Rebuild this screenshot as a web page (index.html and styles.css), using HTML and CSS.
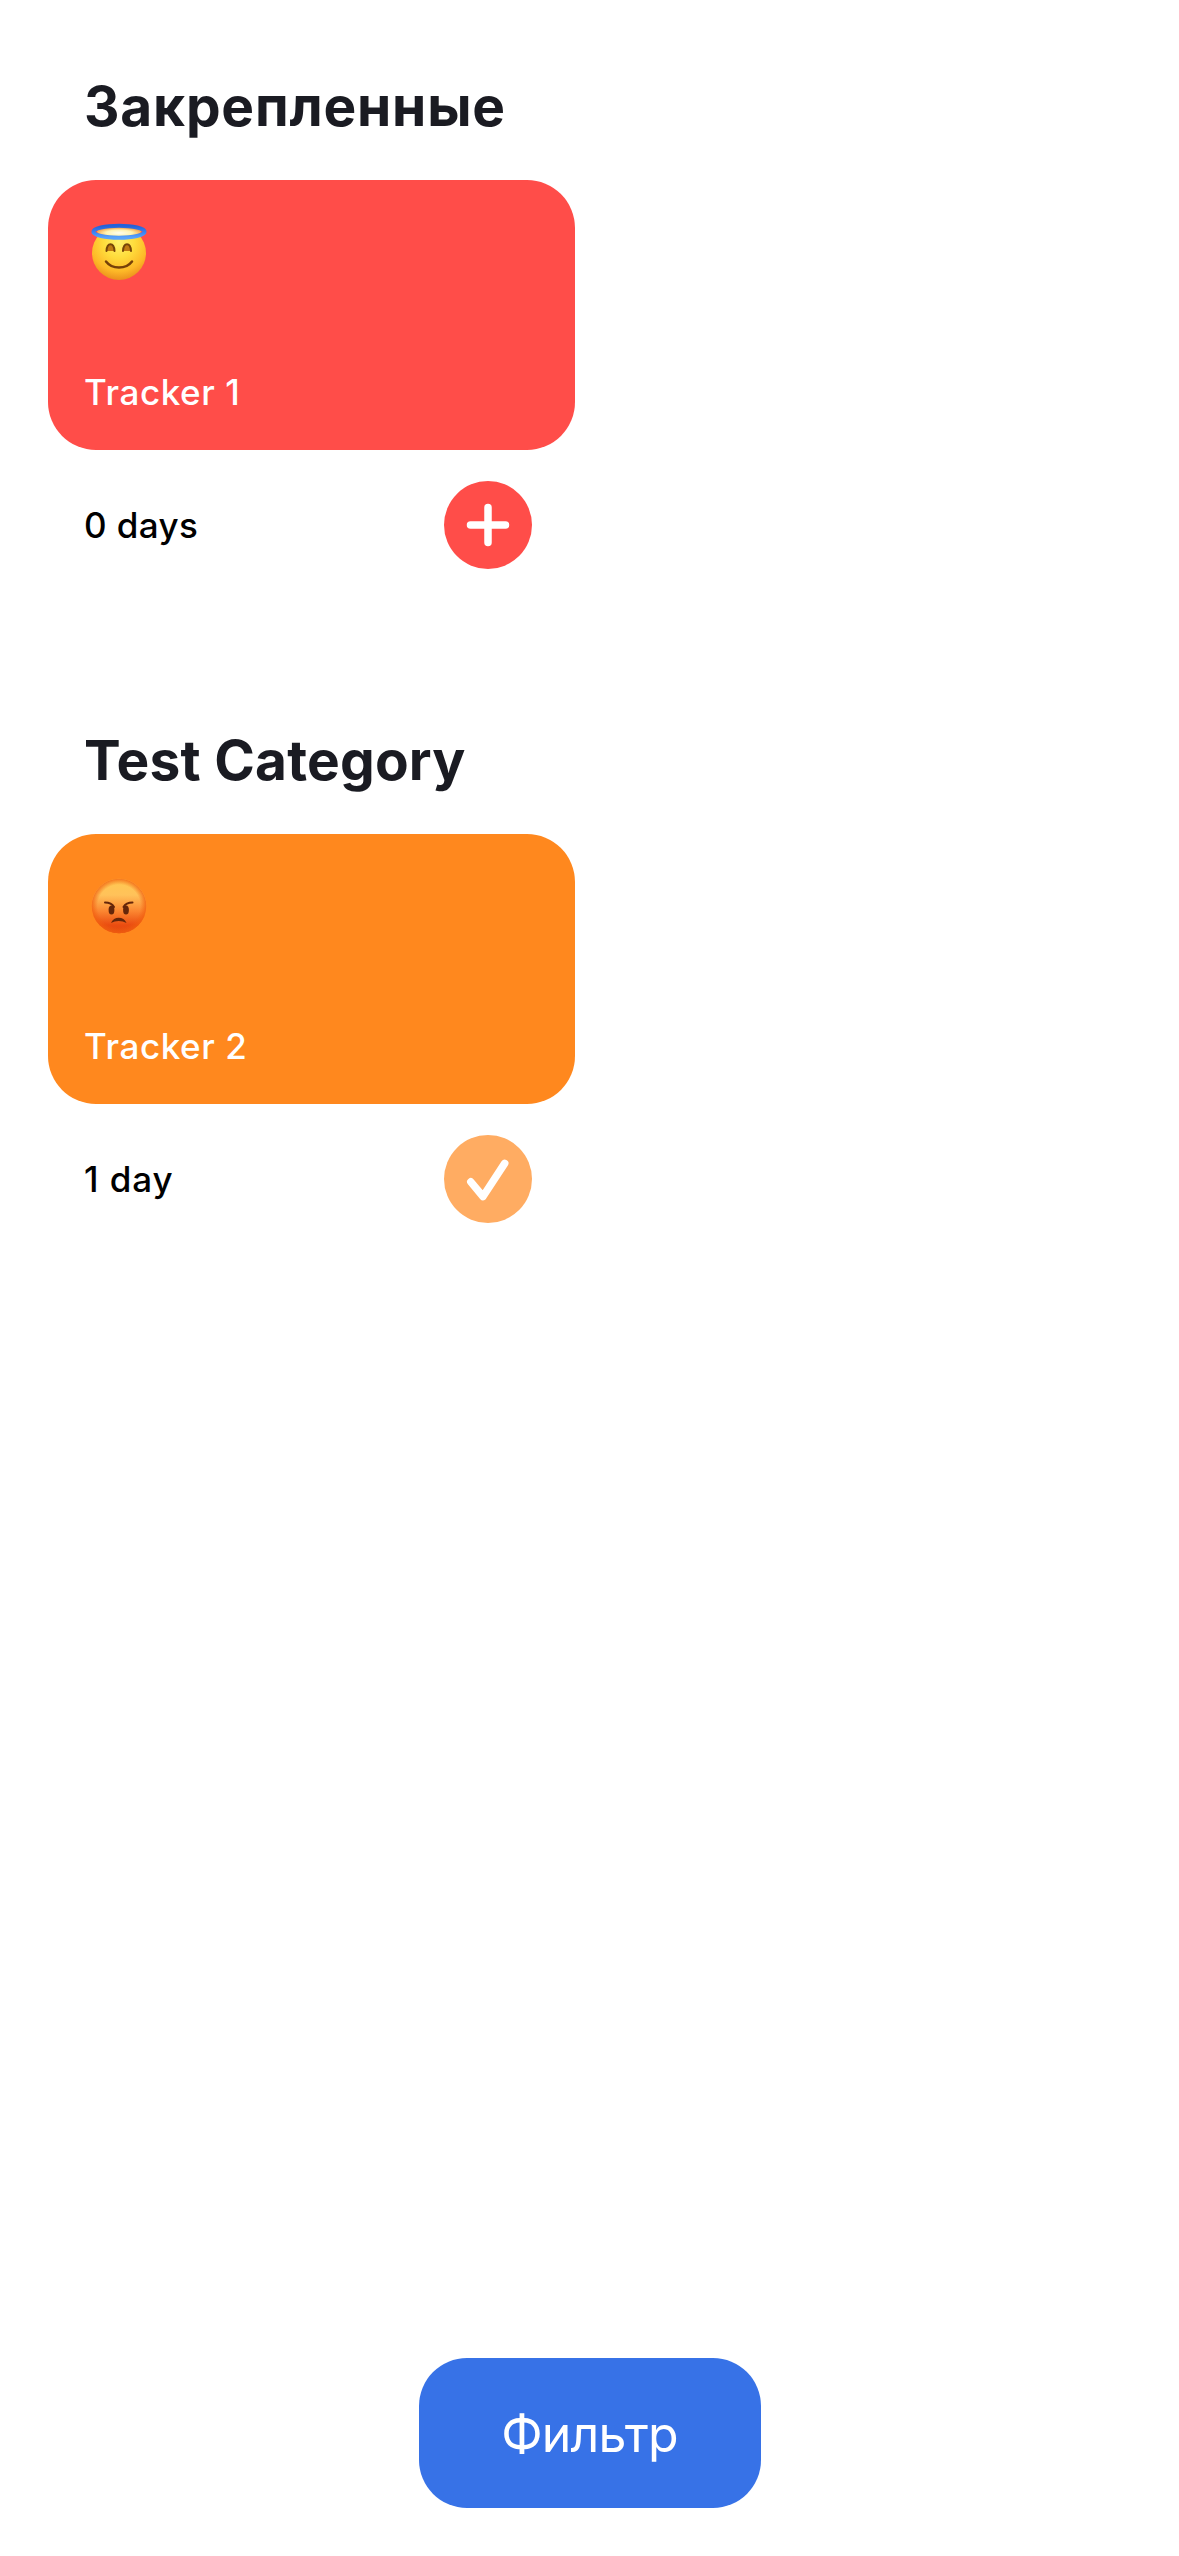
FILE: index.html
```html
<!DOCTYPE html>
<html lang="ru">
<head>
<meta charset="utf-8">
<title>Трекеры</title>
<link rel="stylesheet" href="styles.css">
</head>
<body>
<main class="screen">
  <section class="category">
    <h2 class="category-title title-ru">Закрепленные</h2>
    <article class="tracker">
      <div class="card card-red">
        <svg class="emoji" viewBox="0 0 60 60" role="img" aria-label="😇">
          <defs>
            <radialGradient id="smile-face" cx=".5" cy=".3" r=".72">
              <stop offset="0" stop-color="#fff06a"/>
              <stop offset=".4" stop-color="#ffdc3c"/>
              <stop offset=".75" stop-color="#fdb827"/>
              <stop offset="1" stop-color="#e98a1b"/>
            </radialGradient>
            <linearGradient id="halo" x1="0" y1="0" x2="0" y2="1">
              <stop offset="0" stop-color="#2461d8"/>
              <stop offset=".6" stop-color="#3f86f2"/>
              <stop offset="1" stop-color="#5aa4fb"/>
            </linearGradient>
            <radialGradient id="glow" cx=".5" cy=".65" r=".6">
              <stop offset="0" stop-color="#fffef0"/>
              <stop offset=".5" stop-color="#fff3b0"/>
              <stop offset="1" stop-color="#f58a28"/>
            </radialGradient>
          </defs>
          <circle cx="30" cy="31" r="27" fill="url(#smile-face)"/>
          <ellipse cx="30" cy="9.5" rx="22" ry="5" fill="url(#glow)"/>
          <ellipse cx="30" cy="9.8" rx="25.6" ry="6" fill="none" stroke="url(#halo)" stroke-width="4"/>
          <path d="M17.500 29C18 20 25 20 25.500 29M34 29C34.500 20 41.500 20 42 29" fill="#c17a12" stroke="#764408" stroke-width="2" stroke-linecap="round"/>
          <path d="M17 39.500C23 47.500 37 47.500 43 39.500" fill="none" stroke="#764008" stroke-width="2.500" stroke-linecap="round"/>
        </svg>
        <p class="name">Tracker 1</p>
      </div>
      <div class="status">
        <span class="days">0 days</span>
        <button class="mark mark-red" aria-label="+">
          <svg class="mark-icon" viewBox="0 0 88 88"><path d="M44 26.500V61.500M26.500 44H61.500"/></svg>
        </button>
      </div>
    </article>
  </section>

  <section class="category">
    <h2 class="category-title title-en">Test Category</h2>
    <article class="tracker">
      <div class="card card-orange">
        <svg class="emoji" viewBox="0 0 60 60" role="img" aria-label="😡">
          <defs>
            <linearGradient id="angry-face" x1="0" y1="0" x2="0" y2="1">
              <stop offset="0" stop-color="#ffc850"/>
              <stop offset=".3" stop-color="#ffc25a"/>
              <stop offset=".6" stop-color="#fb8530"/>
              <stop offset=".85" stop-color="#ea4c10"/>
              <stop offset="1" stop-color="#e24b10"/>
            </linearGradient>
            <radialGradient id="angry-edge">
              <stop offset=".78" stop-color="#f2600f" stop-opacity="0"/>
              <stop offset="1" stop-color="#f2600f" stop-opacity=".8"/>
            </radialGradient>
          </defs>
          <circle cx="30" cy="30" r="27.300" fill="url(#angry-face)"/>
          <circle cx="30" cy="30" r="27.300" fill="url(#angry-edge)"/>
          <g fill="#65260a">
            <ellipse cx="22.500" cy="34" rx="2.900" ry="4.600"/>
            <ellipse cx="37" cy="34" rx="2.900" ry="4.600"/>
            <path d="M22 47C24.500 40 35 40 37.500 47C33 44.300 26.500 44.300 22 47Z"/>
          </g>
          <path d="M16 26.500Q22.500 26.500 25 31M43.500 26.500Q37 26.500 34.500 31" fill="none" stroke="#65260a" stroke-width="2" stroke-linecap="round"/>
        </svg>
        <p class="name">Tracker 2</p>
      </div>
      <div class="status">
        <span class="days days-single">1 day</span>
        <button class="mark mark-done" aria-label="✓">
          <svg class="mark-icon" viewBox="0 0 88 88"><path d="M26.800 46.800L39 61.500L60.700 28.400"/></svg>
        </button>
      </div>
    </article>
  </section>

  <button class="filter">Фильтр</button>
</main>
</body>
</html>
```

FILE: styles.css
```css
* {
  box-sizing: border-box;
}

body {
  margin: 0;
  background: #fff;
  font-family: Inter, "Liberation Sans", sans-serif;
}

.screen {
  display: flex;
  flex-direction: column;
  gap: 157px;
  height: 2556px;
  padding: 72px 48px 48px;
}

.category {
  display: flex;
  flex-direction: column;
  gap: 40px;
}

.category-title {
  margin: 0;
  padding-left: 36px;
  font-size: 55px;
  font-weight: 700;
  line-height: 68px;
  color: #1a1b22;
}

.title-ru {
  letter-spacing: 0.8px;
}

.title-en {
  letter-spacing: 0.2px;
}

.tracker {
  display: flex;
  flex-direction: column;
  gap: 31px;
  width: 527px;
}

.card {
  display: flex;
  flex-direction: column;
  justify-content: space-between;
  height: 270px;
  padding: 42px 36px 31px;
  border-radius: 48px;
}

.card-red,
.mark-red {
  background: #ff4d49;
}

.card-orange {
  background: #ff881e;
}

.emoji {
  width: 60px;
  height: 60px;
  margin-left: 5px;
}

.name {
  margin: 0;
  font-size: 35px;
  font-weight: 500;
  line-height: 54px;
  letter-spacing: 0.6px;
  color: #fff;
}

.status {
  display: flex;
  align-items: center;
  justify-content: space-between;
  height: 88px;
  padding: 0 43px 0 36px;
}

.days {
  font-size: 35px;
  font-weight: 500;
  letter-spacing: 0.4px;
  color: #000;
}

.days-single {
  letter-spacing: 0.9px;
}

.mark {
  width: 88px;
  height: 88px;
  padding: 0;
  border: 0;
  border-radius: 50%;
}

.mark-done {
  background: #ffac62;
}

.mark-icon {
  display: block;
  fill: none;
  stroke: #fff;
  stroke-width: 7.5;
  stroke-linecap: round;
  stroke-linejoin: round;
}

.filter {
  align-self: center;
  width: 342px;
  height: 150px;
  margin-top: auto;
  padding: 2px 0 0;
  border: 0;
  border-radius: 48px;
  background: #3772e7;
  color: #fff;
  font-family: inherit;
  font-size: 50px;
  font-weight: 400;
  letter-spacing: -0.8px;
}
```
